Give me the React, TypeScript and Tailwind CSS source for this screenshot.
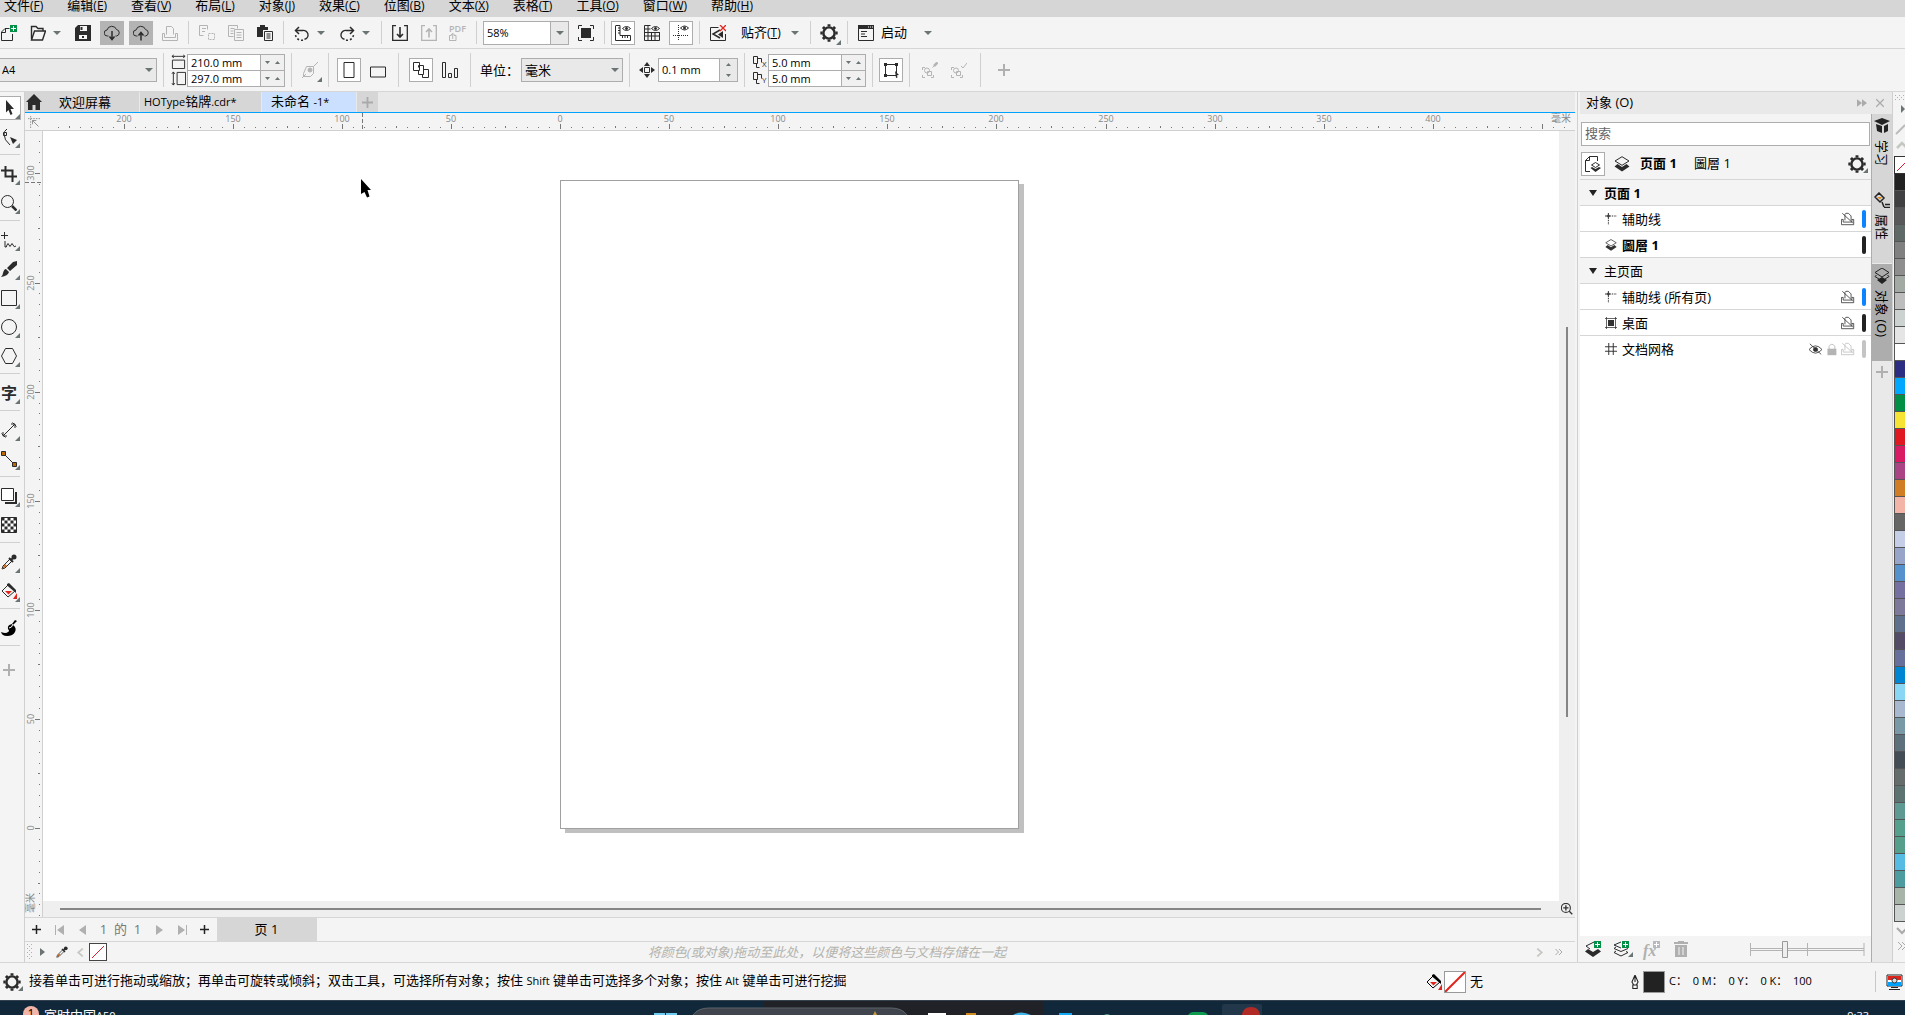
import React, { useState } from "react";

type Kids = { children?: React.ReactNode };

// ---------- shared bits ----------

const Ico = ({ children, size = 16, className = "" }: Kids & { size?: number; className?: string }) => (
  <svg
    width={size}
    height={size}
    viewBox="0 0 16 16"
    fill="none"
    stroke="currentColor"
    strokeWidth="1"
    className={`shrink-0 ${className}`}
    aria-hidden="true"
  >
    {children}
  </svg>
);

const Caret = ({ className = "" }: { className?: string }) => (
  <svg width="8" height="4" viewBox="0 0 8 4" className={`shrink-0 ${className}`} aria-hidden="true">
    <path d="M0 0h8L4 4z" fill="#6b7474" />
  </svg>
);

const Corner = () => (
  <svg width="5" height="5" viewBox="0 0 5 5" className="absolute right-0 bottom-0" aria-hidden="true">
    <path d="M5 0v5H0z" fill="#6b7474" />
  </svg>
);

const Sep = () => (
  <div className="flex h-full w-2 shrink-0 justify-center py-1">
    <div className="w-px bg-[#d0d0d0]" />
  </div>
);

const Tool = ({ label, mode = "plain", dim, children }: Kids & { label: string; mode?: string; dim?: boolean }) => (
  <div className="flex w-[29px] shrink-0 justify-center">
    <button
      aria-label={label}
      className={`relative flex h-6 w-6 items-center justify-center ${dim ? "text-[#b4b4b4]" : "text-[#2b2b2b]"} ${
        mode === "on" ? "border border-[#adadad] bg-white" : mode === "dark" ? "bg-[#b4b4b4]" : ""
      }`}
    >
      {children}
    </button>
  </div>
);

const DropCaret = ({ label }: { label: string }) => (
  <button aria-label={label} className="flex h-6 w-4 shrink-0 items-center pl-px">
    <Caret />
  </button>
);

const Gear = ({ size = 18 }: { size?: number }) => (
  <Ico size={size}>
    <circle cx="8" cy="8" r="5" strokeWidth="2.2" />
    <path
      d="M8 .3v2M8 13.7v2M.3 8h2M13.7 8h2M2.6 2.6L4 4M12 12l1.4 1.4M2.6 13.4L4 12M12 4l1.4-1.4"
      strokeWidth="2.6"
    />
  </Ico>
);

const Layers = ({ size = 16 }: { size?: number }) => (
  <Ico size={size}>
    <path d="M8 .7L1 5l7 4.300L15 5z" />
    <path d="M3.500 8L.5 10.500 8 15.500l7.500-5-3-2.500L8 11z" fill="currentColor" stroke="none" />
  </Ico>
);

const NoPrint = () => (
  <Ico size={14}>
    <path d="M4.500 9.500v-7l1-1h3l3 3v5M.5 8.500v6h14v-6h-2v3h-10v-3zM1.500 1.500l12 11" />
  </Ico>
);

const Dropper = ({ size = 16, tip = "#c8641b" }: { size?: number; tip?: string }) => (
  <Ico size={size}>
    <path d="M9 5L2 12l-1 3 3-1 7-7" />
    <path d="M4 10l-3 5 5-3z" fill={tip} stroke="none" />
    <path d="M8 4l4 4M9.500 6.500l4-4" strokeWidth="2" />
    <circle cx="13" cy="3" r="2.500" fill="currentColor" stroke="none" />
  </Ico>
);

const Bucket = () => (
  <Ico>
    <path d="M1 8l6-6 7 6-7 6z" />
    <path d="M6 1l2-1 7 7v3L6 2.500z" fill="currentColor" stroke="none" />
    <path d="M4 8h7l-3.500 3.500z" fill="#e0241c" stroke="none" />
    <path d="M16 10v6h-4z" fill="#e0241c" stroke="none" />
  </Ico>
);

const Plus = ({ size = 12, color = "#b0b0b0" }: { size?: number; color?: string }) => (
  <svg width={size} height={size} viewBox="0 0 12 12" aria-hidden="true">
    <path d="M6 0v12M0 6h12" stroke={color} strokeWidth="2" />
  </svg>
);

const Grip = () => (
  <svg width="6" height="16" aria-hidden="true">
    {[0, 4, 8, 12].map((y) => (
      <path key={y} d={`M0 ${y}h1v1h-1zM4 ${y}h1v1h-1zM2 ${y + 2}h1v1h-1z`} fill="#b0b0b0" />
    ))}
  </svg>
);

// latin letters run a bit smaller than the chinese around them
const Latin = ({ children }: Kids) => <span className="text-[11px]">{children}</span>;

// ---------- menu ----------

const menus = [
  ["文件", "F"],
  ["编辑", "E"],
  ["查看", "V"],
  ["布局", "L"],
  ["对象", "J"],
  ["效果", "C"],
  ["位图", "B"],
  ["文本", "X"],
  ["表格", "T"],
  ["工具", "O"],
  ["窗口", "W"],
  ["帮助", "H"],
];

const MenuBar = () => (
  <nav className="flex h-[17px] shrink-0 items-end gap-6 overflow-hidden bg-[#d6d6d6] pl-1">
    {menus.map(([name, key]) => (
      <button key={key} className="h-[22px] shrink-0 pb-[2px] leading-4">
        {name}
        <span className="text-xs">
          (<u>{key}</u>)
        </span>
      </button>
    ))}
  </nav>
);

// ---------- standard toolbar ----------

const cloud = "M4.500 11H3.500a3 3 0 0 1-.5-6 5 5 0 0 1 9.500-.5A3.300 3.300 0 0 1 12.500 11h-1";

const MainBar = () => (
  <div className="flex h-8 shrink-0 items-center border-b border-[#d6d6d6]">
    <div className="-ml-[6px] flex">
      <Tool label="新建">
        <Ico>
          <path d="M8.500 3.500H4L.5 7v8.500h11V9M4.500 3.500v4h-4" />
          <path d="M9 0h7v7H9z" fill="#008f45" stroke="none" />
          <path d="M12.500 1v5M10 3.500h5" stroke="#fff" />
        </Ico>
      </Tool>
      <Tool label="打开">
        <Ico>
          <path d="M1.500 14V1.500H6l2 2h5V6" strokeWidth="1.400" />
          <path d="M1.500 15L4.500 6h11l-3 9z" strokeWidth="1.400" />
        </Ico>
      </Tool>
    </div>
    <DropCaret label="最近文件" />
    <Tool label="保存">
      <Ico>
        <path d="M3 0h13v16H0V3z" fill="currentColor" stroke="none" />
        <path d="M5 1h7v5H5zM4 10h8v4H4z" fill="#f4f4f4" stroke="none" />
        <path d="M6.500 2v3M7 12h2" strokeWidth="2" />
      </Ico>
    </Tool>
    <Tool label="从云端打开" mode="dark">
      <Ico>
        <path d={cloud} />
        <path d="M8 6v8M5.500 11.500L8 14.500l2.500-3" strokeWidth="1.500" />
      </Ico>
    </Tool>
    <Tool label="保存到云端" mode="dark">
      <Ico>
        <path d={cloud} />
        <path d="M8 15.500V8M5.500 10.500L8 7.500l2.500 3" strokeWidth="1.500" />
      </Ico>
    </Tool>
    <Tool label="打印" dim>
      <Ico>
        <path d="M4.500 9.500v-8h5l2 2v6M.5 8.500v7h15v-7h-2v4h-11v-4z" />
      </Ico>
    </Tool>
    <Sep />
    <Tool label="剪切" dim>
      <Ico>
        <path d="M.5 10.500v-10h8v4M.5 10.500h4M3 3.500h4M3 6.500h3" />
        <path d="M9.500 8.500h6v6h-6z" strokeDasharray="2 1" />
      </Ico>
    </Tool>
    <Tool label="复制" dim>
      <Ico>
        <path d="M5.500 11.500h-5V.5h9v3M2.500 3.500h4M2.500 6h3M2.500 8.500h3M6.500 4.500h9v11h-9zM8.500 7.500h5M8.500 10h5M8.500 12.500h5" />
      </Ico>
    </Tool>
    <Tool label="粘贴">
      <Ico>
        <path d="M0 2h3V0h5v2h3v3H6v7H0z" fill="currentColor" stroke="none" />
        <path d="M7.500 6.500h8v9h-8zM9.500 9h4M9.500 11h4M9.500 13h4" />
      </Ico>
    </Tool>
    <Sep />
    <Tool label="撤消">
      <Ico>
        <path d="M2 5.500h6.500a4.500 4.500 0 0 1 2 8.800" strokeWidth="1.400" />
        <path d="M5 2L1.500 5.500 5 9" strokeWidth="1.500" />
        <path d="M9 15a6 6 0 0 1-7.500-5" strokeDasharray="2 2" strokeWidth="1.500" />
      </Ico>
    </Tool>
    <DropCaret label="撤消列表" />
    <Tool label="重做">
      <Ico>
        <path d="M14 5.500H7.500a4.500 4.500 0 0 0-2 8.800" strokeWidth="1.400" />
        <path d="M11 2l3.500 3.500L11 9" strokeWidth="1.500" />
        <path d="M7 15a6 6 0 0 0 7.500-5" strokeDasharray="2 2" strokeWidth="1.500" />
      </Ico>
    </Tool>
    <DropCaret label="重做列表" />
    <Sep />
    <Tool label="导入">
      <Ico>
        <path d="M4 .7H.7v14.600h14.600V.7H12" strokeWidth="1.300" />
        <path d="M8 2v10M5 9l3 3 3-3" strokeWidth="1.600" />
      </Ico>
    </Tool>
    <Tool label="导出" dim>
      <Ico>
        <path d="M4 .7H.7v14.600h14.600V.7H12" strokeWidth="1.300" />
        <path d="M8 12.500V4M5 7l3-3 3 3" strokeWidth="1.600" />
      </Ico>
    </Tool>
    <Tool label="发布为 PDF" dim>
      <span className="flex flex-col items-start">
        <span className="text-[9px] leading-2 font-semibold">PDF</span>
        <Ico size={8}>
          <path d="M5 5H1v10h13V5h-4M7.500 12V1M4 4l3.500-3.500L11 4" strokeWidth="2" />
        </Ico>
      </span>
    </Tool>
    <Sep />
    <div className="mr-[2px] ml-[3px] flex h-6 w-[86px] shrink-0 border border-[#adadad] bg-white text-[11px]">
      <input aria-label="缩放级别" defaultValue="58%" className="w-0 flex-1 pl-[3px] outline-none" />
      <button
        aria-label="缩放级别列表"
        className="flex w-[18px] items-center justify-center border-l border-[#adadad] bg-[#e9e9e9]"
      >
        <Caret />
      </button>
    </div>
    <Tool label="全屏预览">
      <Ico>
        <path d="M3 3h10v10H3z" fill="currentColor" stroke="none" />
        <path d="M.5 4V.5H4M12 .5h3.500V4M15.500 12v3.500H12M4 15.500H.5V12" />
      </Ico>
    </Tool>
    <Sep />
    <Tool label="显示标尺" mode="on">
      <Ico>
        <path d="M1 .5h4v10h10.500v5H.5V.5M3 3h2M3 5.500h2M3 8h2M7.500 13v-2M10 13v-2M12.500 13v-2" />
        <path d="M7.500 3.500q4-4 8 0-4 4-8 0z" />
        <circle cx="11.500" cy="3.500" r="1" fill="currentColor" />
      </Ico>
    </Tool>
    <Tool label="显示网格">
      <Ico>
        <path d="M.5 .5h6M.5 .5v15h15V7M.5 4h6M.5 7.500h15M.5 11h15M4 .5v15M7.500 7v8.500M11 7v8.500" />
        <path d="M7.500 3.500q4-4 8 0-4 4-8 0z" />
        <circle cx="11.500" cy="3.500" r="1" fill="currentColor" />
      </Ico>
    </Tool>
    <Tool label="显示辅助线" mode="on">
      <Ico>
        <path d="M5.500 0v16M0 10.500h16" strokeDasharray="1 1" />
        <path d="M7.500 3q4-4 8 0-4 4-8 0z" />
        <circle cx="11.500" cy="3" r="1" fill="currentColor" />
      </Ico>
    </Tool>
    <Sep />
    <Tool label="关闭贴齐">
      <Ico>
        <path d="M8.500 2.500h-8v13h15V9" />
        <path d="M10 5L3 9l7 4" strokeWidth="1.500" />
        <path d="M13 6v7L8 9.500z" fill="currentColor" stroke="none" />
        <path d="M10 0l6 6M16 0l-6 6" stroke="#e0241c" strokeWidth="1.300" />
      </Ico>
    </Tool>
    <button className="ml-[9px] w-[41px] shrink-0 pb-px text-left whitespace-nowrap">
      贴齐
      <span className="text-xs">
        (<u>T</u>)
      </span>
    </button>
    <div className="ml-2">
      <DropCaret label="贴齐选项" />
    </div>
    <Sep />
    <Tool label="选项">
      <Gear />
      <Corner />
    </Tool>
    <Sep />
    <Tool label="启动窗口">
      <Ico>
        <path d="M.5 .5h15v15H.5zM3 6.500h6M3 9h4M3 11.500h6" />
        <path d="M0 0h16v4H0z" fill="currentColor" stroke="none" />
        <path d="M10 2h1M12 2h1M14 2h1" stroke="#fff" />
      </Ico>
    </Tool>
    <button className="ml-px shrink-0 pb-px">启动</button>
    <div className="ml-4">
      <DropCaret label="启动列表" />
    </div>
  </div>
);

// ---------- property bar ----------

const PairField = ({ label, value, second }: { label: string; value: string; second?: boolean }) => (
  <div className={`flex h-[17px] w-[98px] border border-[#adadad] bg-white text-[11px] ${second ? "-mt-px" : ""}`}>
    <input aria-label={label} defaultValue={value} className="w-0 flex-1 pl-[3px] leading-[15px] outline-none" />
    <span className="flex w-6 items-center justify-between border-l border-[#adadad] bg-[#f0f0f0] px-1">
      <button aria-label={`${label}减`} className="text-[#6b7474]">
        <svg width="5" height="3">
          <path d="M0 0h5L2.500 3z" fill="currentColor" />
        </svg>
      </button>
      <button aria-label={`${label}加`} className="text-[#6b7474]">
        <svg width="5" height="3">
          <path d="M0 3h5L2.500 0z" fill="currentColor" />
        </svg>
      </button>
    </span>
  </div>
);

const PropertyBar = () => (
  <div className="flex h-[43px] shrink-0 items-center border-b border-[#d6d6d6]">
    <div className="relative -ml-[2px] h-6 w-[159px] shrink-0 text-[11px]">
      <select
        aria-label="页面大小"
        className="h-full w-full appearance-none border border-[#adadad] bg-[#e9e9e9] pl-[3px] outline-none"
      >
        <option>A4</option>
      </select>
      <Caret className="absolute top-[10px] right-1" />
    </div>
    <div className="ml-[2px] h-full">
      <Sep />
    </div>
    <div className="ml-[3px] flex w-4 flex-col items-center gap-[2px] text-[#2b2b2b]">
      <Ico size={15}>
        <path d="M1.500 6.500h13v9h-13zM1 2.500h14M3 1L1 2.500 3 4M13 1l2 1.500L13 4" />
      </Ico>
      <Ico size={15}>
        <path d="M6.500 1.500h9v13h-9zM2.500 1v14M1 3l1.500-2L4 3M1 13l1.500 2L4 13" />
      </Ico>
    </div>
    <div className="ml-px shrink-0">
      <PairField label="页面宽度" value="210.0 mm" />
      <PairField label="页面高度" value="297.0 mm" second />
    </div>
    <div className="ml-[2px] h-full">
      <Sep />
    </div>
    <Tool label="自动适应页面" dim>
      <Ico>
        <path d="M4.500 4.500h7v7l-3 3h-7v-3l3-7M12 4l4-4M0 16l4-4" />
        <circle cx="8" cy="8" r="2" fill="currentColor" />
      </Ico>
      <Corner />
    </Tool>
    <Sep />
    <div className="ml-[2px] flex">
      <Tool label="纵向" mode="on">
        <Ico>
          <path d="M3 .5h10v15H3z" />
        </Ico>
      </Tool>
      <Tool label="横向">
        <Ico className="mt-1">
          <path d="M.5 3h15v10H.5z" />
        </Ico>
      </Tool>
    </div>
    <div className="ml-[2px] h-full">
      <Sep />
    </div>
    <div className="ml-1 flex">
      <Tool label="所有页面" mode="on">
        <Ico>
          <path d="M.5 .5h6v8h-6zM5.500 5.500v-2h5v9h-5v-4" />
          <path d="M10.500 7.500h5v8h-6v-3" />
        </Ico>
      </Tool>
      <Tool label="当前页面">
        <Ico>
          <path d="M.5 .5h3v15h-3zM6.500 11.500h3v4h-3zM12.500 6.500h3v9h-3z" />
        </Ico>
      </Tool>
    </div>
    <div className="ml-[2px] h-full">
      <Sep />
    </div>
    <label htmlFor="units" className="ml-[6px] w-[41px] shrink-0 pb-px whitespace-nowrap">
      单位：
    </label>
    <div className="relative h-6 w-[102px] shrink-0">
      <select
        id="units"
        className="h-full w-full appearance-none border border-[#adadad] bg-[#e9e9e9] pb-px pl-[3px] outline-none"
      >
        <option>毫米</option>
      </select>
      <Caret className="absolute top-[10px] right-1" />
    </div>
    <div className="ml-[2px] h-full">
      <Sep />
    </div>
    <div className="ml-[6px] text-[#2b2b2b]">
      <Ico>
        <path d="M5.500 5.500h5v5h-5z" />
        <path d="M8 0l3 4H5zM8 16l3-4H5zM0 8l4-3v6zM16 8l-4-3v6z" fill="currentColor" stroke="none" />
      </Ico>
    </div>
    <div className="ml-[3px] flex h-6 w-20 shrink-0 border border-[#adadad] bg-white text-[11px]">
      <input aria-label="微调距离" defaultValue="0.1 mm" className="w-0 flex-1 pl-[3px] outline-none" />
      <span className="flex w-[18px] flex-col items-center justify-between border-l border-[#adadad] bg-[#e9e9e9] py-1">
        <button aria-label="增加微调" className="leading-none">
          <svg width="5" height="3" className="block">
            <path d="M0 3h5L2.500 0z" fill="#6b7474" />
          </svg>
        </button>
        <button aria-label="减少微调" className="leading-none">
          <svg width="5" height="3" className="block">
            <path d="M0 0h5L2.500 3z" fill="#6b7474" />
          </svg>
        </button>
      </span>
    </div>
    <div className="ml-[2px] h-full">
      <Sep />
    </div>
    <div className="ml-1 flex w-4 flex-col gap-[2px] text-[#2b2b2b]">
      {["X", "Y"].map((axis) => (
        <span key={axis} className="flex items-end">
          <svg width="10" height="14" fill="none" stroke="currentColor" aria-hidden="true">
            <path d="M1.500 1.500h4v7h-4zM5.500 3.500h4v4M4.500 9v3.500h3" />
          </svg>
          <span className="text-[8px] leading-[10px]">{axis}</span>
        </span>
      ))}
    </div>
    <div className="shrink-0">
      <PairField label="再制距离 X" value="5.0 mm" />
      <PairField label="再制距离 Y" value="5.0 mm" second />
    </div>
    <div className="ml-[2px] h-full">
      <Sep />
    </div>
    <Tool label="视为已填充" mode="on">
      <Ico>
        <path d="M2.500 2.500h11v11h-11z" />
        <path d="M1 1h3v3H1zM12 1h3v3h-3zM1 12h3v3H1zM12 9l4 4-2 .3.500 2.200-1.500.5z" fill="currentColor" stroke="none" />
      </Ico>
    </Tool>
    <Sep />
    <div className="ml-[2px] flex">
      <Tool label="编辑边界" dim>
        <Ico>
          <path d="M.5 8V5.500H3M.5 13v2.500H3M9 15.500h2.500V13M5.500 9.500h4v4h-4zM15 1l-4.500 4.500" />
          <circle cx="5" cy="8.500" r="2.500" />
          <path d="M15.500 .5L12 4" strokeWidth="2.500" />
        </Ico>
      </Tool>
      <Tool label="完成边界" dim>
        <Ico>
          <path d="M.5 8V5.500H3M.5 13v2.500H3M9 15.500h2.500V13M5.500 9.500h4v4h-4zM10 4l2 2 4-5" />
          <circle cx="5" cy="8.500" r="2.500" />
        </Ico>
      </Tool>
    </div>
    <div className="ml-[3px] h-full">
      <Sep />
    </div>
    <button aria-label="自定义属性栏" className="ml-[14px]">
      <Plus />
    </button>
  </div>
);

// ---------- toolbox ----------

const BoxTool = ({ label, on, corner = true, children }: Kids & { label: string; on?: boolean; corner?: boolean }) => (
  <div className="flex h-[29px] w-full shrink-0 items-end pb-[1px]">
    <button
      aria-label={label}
      className={`relative flex h-6 w-[21px] items-center border-y border-r pl-px text-[#2b2b2b] ${
        on ? "border-[#adadad] bg-white" : "border-transparent"
      }`}
    >
      {children}
      {corner && <Corner />}
    </button>
  </div>
);

const BoxSep = () => (
  <div className="flex h-2 shrink-0 items-center">
    <div className="h-px w-5 bg-[#d0d0d0]" />
  </div>
);

const Toolbox = () => (
  <aside className="flex w-[25px] shrink-0 flex-col border-r border-[#d0d0d0]">
    <BoxTool label="选择工具" on>
      <Ico>
        <path d="M5 0l8 9H9.500l2 5-2 1-2-5L5 12.500z" fill="currentColor" stroke="none" />
      </Ico>
    </BoxTool>
    <BoxTool label="形状工具">
      <Ico>
        <path d="M6 0Q3 2 3 5q0 6 6 11M2.500 3.500h3v3h-3z" />
        <path d="M9 8l7 3-4 4z" fill="currentColor" stroke="none" />
      </Ico>
    </BoxTool>
    <BoxSep />
    <BoxTool label="裁剪工具">
      <Ico>
        <path d="M4.500 0v10.500H16M0 4.500h11.500V16" strokeWidth="2" />
      </Ico>
    </BoxTool>
    <BoxTool label="缩放工具">
      <Ico>
        <circle cx="6.500" cy="6.500" r="6" />
        <path d="M11 11l4.500 4.500" strokeWidth="2.500" />
      </Ico>
    </BoxTool>
    <BoxSep />
    <BoxTool label="手绘工具">
      <Ico>
        <path d="M3.500 0v7M0 3.500h7M4 9v6q1.500 1 2-2 1-3 2 0t2 0 2 0 3 1" />
      </Ico>
    </BoxTool>
    <BoxTool label="艺术笔工具">
      <Ico>
        <path d="M16 0v4l-7 6-3-3 6-6zM5 8l3 3q-1 4-8 5 2-2 2-4 1-4 3-4z" fill="currentColor" stroke="none" />
      </Ico>
    </BoxTool>
    <BoxTool label="矩形工具">
      <Ico>
        <path d="M.5 .5h15v15H.5z" />
      </Ico>
    </BoxTool>
    <BoxTool label="椭圆形工具">
      <Ico>
        <circle cx="8" cy="8" r="7.500" />
      </Ico>
    </BoxTool>
    <BoxTool label="多边形工具">
      <Ico>
        <path d="M4.500 .5h7l4 7.500-4 7.500h-7L.5 8z" />
      </Ico>
    </BoxTool>
    <BoxSep />
    <BoxTool label="文本工具">
      <span className="text-base leading-4 font-bold">字</span>
    </BoxTool>
    <BoxSep />
    <BoxTool label="平行度量工具">
      <Ico>
        <path d="M2.500 13.500l11-11M.5 11.500l4 4M11.500 .5l4 4M2 10v4h4M10 2h4v4" />
      </Ico>
    </BoxTool>
    <BoxTool label="连接器工具">
      <Ico>
        <path d="M3 3l10 10" />
        <path d="M.5 .5h4v4h-4zM11.500 11.500h4v4h-4z" fill="#b96a00" />
      </Ico>
    </BoxTool>
    <BoxSep />
    <BoxTool label="阴影工具">
      <Ico>
        <path d="M.5 .5h12v12H.5z" fill="#fff" />
        <path d="M4 15h11V4" strokeWidth="2" />
      </Ico>
    </BoxTool>
    <BoxTool label="透明度工具" corner={false}>
      <Ico>
        <path d="M.5 .5h15v15H.5z" fill="#fff" />
        {[0, 1, 2, 3, 4].map((r) =>
          [0, 1, 2, 3, 4]
            .filter((c) => (r + c) % 2 === 0)
            .map((c) => (
              <path
                key={`${r}${c}`}
                d={`M${c * 3 + 0.5} ${r * 3 + 0.5}h3v3h-3z`}
                fill="currentColor"
                stroke="none"
              />
            ))
        )}
      </Ico>
    </BoxTool>
    <BoxSep />
    <BoxTool label="颜色滴管工具">
      <Dropper />
    </BoxTool>
    <BoxTool label="交互式填充工具">
      <Bucket />
    </BoxTool>
    <BoxSep />
    <BoxTool label="智能绘图" corner={false}>
      <Ico>
        <path d="M14 0l2 1-4 4q4 3 2 7-2 4-8 4-5 0-6-4 5 2 7 0 2-1 0-3-1-4 4-5z" fill="#000" stroke="none" />
        <path d="M8 8q3 0 4-4" stroke="#fff" />
      </Ico>
    </BoxTool>
    <BoxSep />
    <button aria-label="自定义工具箱" className="mt-[15px] ml-[3px] w-3">
      <Plus />
    </button>
  </aside>
);

// ---------- document area ----------

// pixels for one millimetre at 58%
const MM = 2.182;
const steps = Array.from({ length: 140 }, (_, i) => (i - 46) * 5);

const HRuler = () => (
  <div className="flex h-[18px] shrink-0 border-b border-[#d0d0d0]">
    <div className="flex w-[18px] shrink-0 items-center justify-center text-[#777]">
      <Ico size={12}>
        <path d="M3.500 0v16M0 3.500h16" strokeDasharray="2 1.500" />
        <path d="M6 6l8 8M6 11V6h5" />
      </Ico>
    </div>
    <div className="relative min-w-0 flex-1 overflow-hidden">
      <svg width="100%" height="17" className="block text-[9px]" shapeRendering="crispEdges">
        {steps.map((v) => {
          const x = Math.round(517 + v * MM);
          const major = v % 50 === 0;
          return (
            <g key={v}>
              <rect x={x} y={major ? 11 : v % 25 === 0 ? 13 : 14} width="1" height={major ? 5 : v % 25 === 0 ? 2 : 1} fill="#777" />
              {major && v < 450 && (
                <text x={x} y="9" textAnchor="middle" fill="#888">
                  {Math.abs(v)}
                </text>
              )}
            </g>
          );
        })}
        <path d="M319.500 0v17" stroke="#777" strokeDasharray="4 2" />
      </svg>
      <span className="absolute top-0 right-1 text-[10px] leading-[11px] text-[#888]">毫米</span>
    </div>
  </div>
);

const VRuler = () => (
  <div className="relative w-[18px] shrink-0 overflow-hidden border-r border-[#d0d0d0]">
    <svg width="17" height="100%" className="block text-[9px]" shapeRendering="crispEdges">
      {steps
        .filter((v) => v > -45 && v < 325)
        .map((v) => {
          const y = Math.round(697 - v * MM);
          const major = v % 50 === 0;
          return (
            <g key={v}>
              <rect x={major ? 10 : v % 25 === 0 ? 13 : 14} y={y} width={major ? 5 : v % 25 === 0 ? 2 : 1} height="1" fill="#777" />
              {major && (
                <text x="9" y={y} textAnchor="middle" fill="#888" transform={`rotate(-90 9 ${y})`}>
                  {Math.abs(v)}
                </text>
              )}
            </g>
          );
        })}
      <path d="M0 51.500h17" stroke="#777" strokeDasharray="4 2" />
    </svg>
    <span className="absolute bottom-1 left-0 rotate-180 text-[10px] leading-[11px] text-[#888] [text-orientation:sideways] [writing-mode:vertical-rl]">
      毫米
    </span>
  </div>
);

const DocTabs = () => (
  <div className="flex h-[21px] shrink-0 border-b border-[#00a2ff] bg-[#e9e9e9]">
    <button aria-label="主页" className="flex w-[17px] items-center bg-[#d6d6d6] pl-px text-[#2b2b2b]">
      <Ico>
        <path d="M8 0l8 8h-2v8H9.500v-5h-3v5H2V8H0z" fill="currentColor" stroke="none" />
      </Ico>
    </button>
    <button className="w-[97px] shrink-0 bg-[#d6d6d6] pb-px pl-[17px] text-left">欢迎屏幕</button>
    <button className="w-[122px] shrink-0 border-l border-[#e9e9e9] bg-[#d6d6d6] pb-px pl-1 text-left">
      <Latin>HOType</Latin>铭牌<Latin>.cdr*</Latin>
    </button>
    <button className="w-24 shrink-0 border-x border-[#e9e9e9] bg-[#cbe0ff] pb-px pl-[9px] text-left">
      未命名 <Latin>-1*</Latin>
    </button>
    <button aria-label="新建文档" className="flex w-[21px] items-center justify-center bg-[#d6d6d6]">
      <Plus size={11} color="#aaa" />
    </button>
  </div>
);

const Canvas = () => (
  <div className="flex min-h-0 flex-1">
    <VRuler />
    <div className="flex min-w-0 flex-1 flex-col">
      <div className="flex min-h-0 flex-1">
        <div className="relative min-w-0 flex-1 overflow-hidden bg-white">
          <div className="absolute top-[49px] left-[517px] h-[649px] w-[459px] border border-[#a0a0a0] bg-white shadow-[5px_4px_0_#c0c0c0]" />
          <svg width="12" height="20" className="absolute top-[48px] left-[318px]" aria-hidden="true">
            <path d="M0 0l10 11H6.500l2 6.500-2.500 1-2.500-5.500L0 15z" fill="#000" />
          </svg>
        </div>
        <div className="flex w-4 shrink-0 flex-col items-center bg-[#efefef] pt-[196px] pb-[184px]">
          <div className="w-[2px] flex-1 bg-[#858585]" />
        </div>
      </div>
      <div className="flex h-4 shrink-0 items-center bg-[#efefef] pr-[2px] pl-[17px]">
        <div className="mr-5 h-[2px] flex-1 bg-[#858585]" />
        <button aria-label="导航器" className="text-[#333]">
          <Ico size={12}>
            <circle cx="6.500" cy="6.500" r="6" strokeWidth="1.500" />
            <path d="M6.500 3v7M3 6.500h7M11 11l4 4" strokeWidth="1.800" />
          </Ico>
        </button>
      </div>
    </div>
  </div>
);

const NavTri = ({ d, label }: { d: string; label: string }) => (
  <button aria-label={label} className="flex w-[23px] justify-center">
    <svg width="10" height="10">
      <path d={d} fill="#b0b0b0" />
    </svg>
  </button>
);

const PageNav = () => (
  <div className="flex h-[25px] shrink-0 items-center border-y border-[#d6d6d6]">
    <button aria-label="在前面添加页" className="flex w-[23px] justify-center">
      <Plus size={9} color="#222" />
    </button>
    <NavTri label="首页" d="M0 0h1v10h-1zM9 0v10L2 5z" />
    <NavTri label="上一页" d="M8 0v10L1 5z" />
    <span className="w-[53px] pb-px text-center text-[#777]">1&nbsp; 的&nbsp; 1</span>
    <NavTri label="下一页" d="M2 0v10l7-5z" />
    <NavTri label="末页" d="M1 0v10l7-5zM9 0h1v10h-1z" />
    <button aria-label="在后面添加页" className="flex w-[23px] justify-center">
      <Plus size={9} color="#222" />
    </button>
    <button className="ml-[1px] h-full w-[100px] bg-[#d6d6d6] pr-px pb-[2px]">页 1</button>
  </div>
);

const DocPalette = () => (
  <div className="flex h-5 shrink-0 items-center">
    <div className="ml-[2px]">
      <Grip />
    </div>
    <button aria-label="调色板选项" className="ml-[7px]">
      <svg width="5" height="8">
        <path d="M0 0v8l5-4z" fill="#6b7474" />
      </svg>
    </button>
    <button aria-label="取色" className="ml-[11px] text-[#2b2b2b]">
      <Dropper size={12} />
    </button>
    <button aria-label="向左滚动" className="ml-2 text-[#c4c8c0]">
      <Ico size={9}>
        <path d="M12 1L4 8l8 7" strokeWidth="3" />
      </Ico>
    </button>
    <button aria-label="无颜色" className="ml-[4px] border border-[#444] bg-white">
      <Ico>
        <path d="M2 14L14 2" stroke="#d8202c" />
      </Ico>
    </button>
    <p className="min-w-0 flex-1 pb-px pl-3 text-center text-[#b3b3ad] italic">
      将颜色(或对象)拖动至此处，以便将这些颜色与文档存储在一起
    </p>
    <button aria-label="向右滚动" className="mr-[11px] text-[#c4c8c0]">
      <Ico size={9}>
        <path d="M4 1l8 7-8 7" strokeWidth="3" />
      </Ico>
    </button>
    <button aria-label="展开" className="mr-3 text-[#aaa]">
      <Ico size={8}>
        <path d="M1 2l6 6-6 6M8 2l6 6-6 6" strokeWidth="2" />
      </Ico>
    </button>
  </div>
);

// ---------- objects docker ----------

type Row = { name: string; icon?: string; bold?: boolean; head?: boolean; bar?: string; noPrint?: boolean; off?: boolean };

const rows: Row[] = [
  { name: "页面 1", head: true, bold: true },
  { name: "辅助线", icon: "guide", bar: "#0a84ff", noPrint: true },
  { name: "圖層 1", icon: "layer", bold: true, bar: "#222223" },
  { name: "主页面", head: true },
  { name: "辅助线 (所有页)", icon: "guide", bar: "#0a84ff", noPrint: true },
  { name: "桌面", icon: "desk", bar: "#222223", noPrint: true },
  { name: "文档网格", icon: "grid", bar: "#c4c4c4", off: true },
];

const RowIcon = ({ kind }: { kind?: string }) => {
  if (kind === "layer") return <Layers size={12} />;
  if (kind === "desk")
    return (
      <Ico size={12}>
        <path d="M4 4h8v8H4z" fill="currentColor" stroke="none" />
        <path d="M2 0v16M14 0v16M0 2h16M0 14h16" />
      </Ico>
    );
  if (kind === "grid")
    return (
      <Ico size={12}>
        <path d="M5 0v16M11 0v16M0 5h16M0 11h16" strokeWidth="1.300" />
      </Ico>
    );
  return (
    <Ico size={12}>
      <path d="M0 4h8" strokeWidth="1.300" />
      <path d="M4.500 0v8" strokeWidth="1.300" />
      <path d="M9 4h7M4.500 9v7" strokeDasharray="2 1.300" strokeWidth="1.300" />
      <circle cx="4.500" cy="4" r="1.500" />
    </Ico>
  );
};

const ObjectList = () => {
  const [closed, setClosed] = useState(false);

  return (
    <ul className="min-h-0 flex-1 bg-white">
      {rows.map((row, i) => (
        <li
          key={row.name}
          className={`flex h-[26px] items-center ${i < rows.length - 1 ? "border-b border-[#d6d6d6]" : ""} ${
            row.head ? "bg-[#f4f4f4] pl-[9px]" : "pl-[25px]"
          }`}
        >
          {row.head ? (
            <button aria-label="折叠" aria-expanded={!closed} onClick={() => setClosed(!closed)}>
              <svg width="8" height="6">
                <path d="M0 0h8L4 6z" fill="#222" />
              </svg>
            </button>
          ) : (
            <span className="text-[#333]">
              <RowIcon kind={row.icon} />
            </span>
          )}
          <span className={`flex-1 ${row.head ? "pl-[7px]" : "pl-[5px]"} ${row.bold ? "font-bold" : ""}`}>
            {row.name}
          </span>
          {row.off && (
            <span className="mr-[3px] flex items-center gap-[3px] text-[#333]">
              <Ico size={13}>
                <path d="M0 8q8-9 16 0-8 9-16 0zM1 1l14 13" />
                <circle cx="8" cy="8" r="2.500" fill="currentColor" />
              </Ico>
              <Ico size={13} className="text-[#b4b4b4]">
                <path d="M3 7h11v8H3z" fill="currentColor" stroke="none" />
                <path d="M5 8V4q3.500-5 7 0v4" />
              </Ico>
            </span>
          )}
          {(row.noPrint || row.off) && (
            <span className={row.off ? "text-[#c4c4c4]" : "text-[#444]"}>
              <NoPrint />
            </span>
          )}
          {row.bar && (
            <span className="mr-[5px] ml-[7px] h-[18px] w-1 rounded-full" style={{ background: row.bar }} />
          )}
        </li>
      ))}
    </ul>
  );
};

const SideTab = ({ label, on, className, children }: Kids & { label: string; on?: boolean; className: string }) => (
  <button
    className={`flex w-full shrink-0 flex-col items-center pt-1 text-[#222] ${className} ${
      on ? "bg-[#adadad]" : "bg-[#d6d6d6]"
    }`}
  >
    {children}
    <span className="mt-[6px] whitespace-nowrap text-black [text-orientation:sideways] [writing-mode:vertical-rl]">
      {label}
    </span>
  </button>
);

const Docker = () => (
  <aside className="flex w-[315px] shrink-0 flex-col border-l border-[#d0d0d0] pl-[2px]">
    <header className="flex h-[22px] shrink-0 items-center bg-[#e9e9e9] pr-[7px] pl-[6px]">
      <h2 className="flex-1 pb-[2px]">对象 (O)</h2>
      <button aria-label="折叠泊坞窗" className="mr-2 text-[#aaa]">
        <Ico size={10}>
          <path d="M0 2l8 6-8 6zM8 2l8 6-8 6z" fill="currentColor" stroke="none" />
        </Ico>
      </button>
      <button aria-label="关闭" className="text-[#aaa]">
        <Ico size={10}>
          <path d="M2 2l12 12M14 2L2 14" strokeWidth="2" />
        </Ico>
      </button>
    </header>
    <div className="flex min-h-0 flex-1">
      <div className="flex min-w-0 flex-1 flex-col border-r border-[#adadad]">
        <div className="flex px-px pt-2">
          <input
            aria-label="搜索"
            placeholder="搜索"
            className="h-6 w-full border border-[#adadad] bg-white pb-[2px] pl-[3px] outline-none placeholder:text-[#666]"
          />
        </div>
        <div className="mt-[2px] flex h-8 shrink-0 items-center border-b border-[#d6d6d6]">
          <button
            aria-label="显示页面"
            className="ml-px flex h-6 w-6 items-center justify-center border border-[#adadad] bg-white text-[#2b2b2b]"
          >
            <Ico>
              <path d="M4.500 .5h8V5M4.500 .5l-4 4v11H5M4.500 .5v4h-4" />
              <path d="M10.500 6.500L6.500 9l4 2.500 4-2.500z" />
              <path d="M5.500 12l1.500-1 3.500 2 3.500-2 2 1-5.500 4z" fill="currentColor" stroke="none" />
            </Ico>
          </button>
          <button aria-label="图层视图" className="ml-[9px] text-[#2b2b2b]">
            <Layers />
          </button>
          <span className="ml-[10px] w-[54px] pb-px font-bold">页面 1</span>
          <span className="flex-1 pb-px">圖層 1</span>
          <button aria-label="选项" className="relative mr-[3px] pr-[2px] text-[#2b2b2b]">
            <Gear />
            <Corner />
          </button>
        </div>
        <ObjectList />
        <footer className="flex h-[26px] shrink-0 items-center pl-[5px] text-[#2b2b2b]">
          <button aria-label="新建图层">
            <Ico>
              <path d="M9 1L1 5l4 3" />
              <path d="M3 8l5 3 5-3 3 2.500L8 16l-8-5.500z" fill="currentColor" stroke="none" />
              <path d="M9 0h7v7H9z" fill="#008f45" stroke="none" />
              <path d="M12.500 1v5M10 3.500h5" stroke="#fff" />
            </Ico>
          </button>
          <button aria-label="新建主图层" className="relative ml-[12px] w-5">
            <Ico>
              <path d="M8 1L1 4l7 3M3 6l-2 1.500 7 3 7-3M3 10l-2 1.500 7 3.500 7-3.500-2-1" />
              <path d="M9 0h7v7H9z" fill="#008f45" stroke="none" />
              <path d="M12.500 1v5M10 3.500h5" stroke="#fff" />
            </Ico>
            <Corner />
          </button>
          <button aria-label="添加效果" className="relative ml-[10px] h-4 w-4 text-left text-[#b0b0b0]">
            <span className="font-['Liberation_Serif'] text-base leading-5 font-bold italic">fx</span>
            <svg width="7" height="7" className="absolute top-0 -right-px">
              <path d="M0 0h7v7H0z" fill="#b8b8c0" />
              <path d="M3.500 1v5M1 3.500h5" stroke="#fff" />
            </svg>
          </button>
          <button aria-label="删除" className="ml-[14px] text-[#b0b0b0]">
            <Ico>
              <path d="M1 1h4V0h6v1h4v2H1zM2 4h12v12H2z" fill="currentColor" stroke="none" />
              <path d="M6 6v8M10 6v8" stroke="#f4f4f4" />
            </Ico>
          </button>
          <svg width="116" height="18" className="mr-[6px] ml-auto" role="img" aria-label="缩略图大小">
            <path d="M1 8.500h114M1 10.500h114M1.500 3v13M58.500 3v13M115 3v13" stroke="#b4b4b4" fill="none" />
            <path d="M33.500 1.500h5v16h-5z" fill="#eee" stroke="#999" />
          </svg>
        </footer>
      </div>
      <div className="flex w-5 shrink-0 flex-col items-center bg-[#e9e9e9]">
        <SideTab label="学习" className="h-[74px]">
          <Ico>
            <path d="M8 0l8 3-8 4-8-4zM2 6l6 2v7l-5-2zM10 8l4-2v7l-4 2z" fill="currentColor" stroke="none" />
          </Ico>
        </SideTab>
        <SideTab label="属性" className="h-[75px]">
          <Ico>
            <path d="M1 5l4-4 5 5-4 4zM10 15.500h6M11 12.500h5M8 10l2 5" strokeWidth="1.500" />
            <path d="M3 5h5l-2 2.500z" fill="#e08a1e" stroke="none" />
          </Ico>
        </SideTab>
        <SideTab label="对象 (O)" on className="mt-px h-[97px]">
          <Ico>
            <path d="M8 0L1 4.500 8 9l7-4.500zM2.500 7L1 8.500 8 13l7-4.500L13.500 7" />
            <path d="M3 12l5-3 5 3-5 4z" fill="currentColor" stroke="none" />
          </Ico>
        </SideTab>
        <button aria-label="添加泊坞窗" className="mt-[5px]">
          <Plus />
        </button>
      </div>
    </div>
  </aside>
);

// ---------- colour palette on the right edge ----------

const swatches = [
  "#222223", "#404042", "#58585a", "#5f6968", "#808080", "#8e8e8e", "#a3aaa3", "#bdbdbd", "#cbd2cf", "#e4e5e4",
  "#ffffff", "#2c2e83", "#00a9ff", "#008f45", "#f6e333", "#df1821", "#d91b63", "#aa4484", "#d17d26", "#f3b5a7",
  "#666664", "#c4cee6", "#96a5c9", "#5592cd", "#7471a0", "#7d799a", "#5f708c", "#544c66", "#66709a", "#0085d2",
  "#8ad7f5", "#a8b8cf", "#7899a5", "#5c717c", "#444c54", "#656d6c", "#5c7371", "#5e9993", "#55a08d", "#569f8a",
  "#57bce4", "#4c9ca0", "#a6b5a8", "#cbd2cf",
];

const ColorStrip = () => (
  <aside className="flex w-[13px] shrink-0 flex-col items-end overflow-hidden border-l border-[#d0d0d0]">
    <svg width="10" height="64" className="shrink-0" aria-hidden="true">
      <path d="M0 3h1v1h-1zM4 3h1v1h-1zM8 3h1v1h-1zM2 5h1v1h-1zM6 5h1v1h-1zM0 7h1v1h-1zM4 7h1v1h-1zM8 7h1v1h-1z" fill="#b0b0b0" />
      <path d="M6 13v8l4-4z" fill="#6b7474" />
      <path d="M1 42l9-9" stroke="#bbb" strokeWidth="2" />
      <path d="M2 56l5-5 5 5" stroke="#c4c8c0" strokeWidth="2.500" fill="none" />
    </svg>
    <button aria-label="无填充" className="h-[18px] w-[11px] shrink-0 border-y border-l border-[#333] bg-white">
      <svg width="10" height="16">
        <path d="M2 14L10 6" stroke="#d8202c" />
      </svg>
    </button>
    {swatches.map((c, i) => (
      <button
        key={i}
        aria-label={c}
        className="h-[17px] w-[11px] shrink-0 border-b border-l border-[#555]"
        style={{ background: c }}
      />
    ))}
    <svg width="10" height="36" className="shrink-0" aria-hidden="true">
      <path d="M2 6l5 5 5-5" stroke="#aaa" strokeWidth="2" fill="none" />
      <path d="M3 20l4 4-4 4M7 20l4 4-4 4" stroke="#aaa" fill="none" />
    </svg>
  </aside>
);

// ---------- bottom ----------

const StatusBar = () => (
  <footer className="flex h-[38px] shrink-0 items-center border-t border-[#d6d6d6] pl-[3px]">
    <button aria-label="状态栏选项" className="relative pr-[2px] text-[#2b2b2b]">
      <Gear />
      <Corner />
    </button>
    <p className="ml-[6px] flex-1 pb-[2px] whitespace-nowrap">
      接着单击可进行拖动或缩放；再单击可旋转或倾斜；双击工具，可选择所有对象；按住 <Latin>Shift</Latin>{" "}
      键单击可选择多个对象；按住 <Latin>Alt</Latin> 键单击可进行挖掘
    </p>
    <div className="flex w-[202px] shrink-0 items-center">
      <Bucket />
      <span className="mr-1 ml-[2px] border border-[#999] bg-white">
        <svg width="20" height="20" className="block">
          <path d="M0 20L20 0" stroke="#e0241c" strokeWidth="2" />
        </svg>
      </span>
      <span className="pb-[2px]">无</span>
    </div>
    <div className="flex w-[247px] shrink-0 items-center">
      <Ico size={14} className="text-[#222]">
        <path d="M8 0L4.500 8l2 3.500h3l2-3.500zM8 2v6M5.500 11.500h5v4h-5z" strokeWidth="1.200" />
      </Ico>
      <span className="ml-px h-[22px] w-[22px] border border-[#999] bg-[#222223]" />
      <span className="ml-1 pb-px text-[11px] whitespace-pre">C：  0 M：  0 Y：  0 K：  100</span>
    </div>
    <div className="mr-[2px] flex h-full shrink-0 items-center gap-[10px] py-2">
      <div className="h-full w-px bg-[#c8c8c8]" />
      <svg width="17" height="16" role="img" aria-label="校样颜色">
        <path d="M1 1h15v11H1z" fill="#fff" stroke="#222" />
        <path d="M2 2h13v4H2z" fill="#e0241c" />
        <path d="M2 8h13v4H2z" fill="#00a2ff" />
        <circle cx="8.500" cy="6.500" r="2.500" fill="#ddd" stroke="#333" />
        <path d="M5 13.500h7M3 15.500h11" stroke="#222" />
      </svg>
    </div>
  </footer>
);

const Taskbar = () => (
  <div className="flex h-[15px] shrink-0 items-start overflow-hidden border-t border-[#33424e] bg-[#10283a] text-[13px] text-white">
    <span className="mt-[5px] ml-[23px] h-4 w-4 shrink-0 rounded-full bg-[#f3b5a7] text-center text-xs leading-4 text-black">
      1
    </span>
    <span className="mt-1 ml-[5px] w-[610px] shrink-0 leading-5">
      富时中国<Latin>A50</Latin>
    </span>
    <svg width="640" height="14" className="shrink-0" aria-hidden="true">
      <path d="M110 0h280v14H110z" fill="#202228" />
      <path d="M0 12h11v2H0zM12 12h11v2H12z" fill="#6ecbf2" />
      <path d="M39 14q5-7 16-7h182q11 0 16 7" fill="#40454d" stroke="#5d626a" />
      <path d="M219 14l2-4 2 4z" fill="#c9973c" />
      <path d="M274 12h18v2h-18z" fill="#fff" />
      <path d="M312 12h10v2h-10z" fill="#d08a1e" />
      <path d="M359 14q8-5 18 0z" fill="#43b5e8" />
      <path d="M405 12h13v2h-13z" fill="#12a8f5" />
      <path d="M450 14q3-2 6 0z" fill="#4c9a7c" />
      <path d="M534 14q2-3 5-3h10q3 0 5 3z" fill="#0d9b50" />
      <path d="M568 14V5q0-2 2-2h36q2 0 2 2v9z" fill="#22384a" />
      <path d="M588 14q1-8 9-8t9 8z" fill="#b22a26" />
    </svg>
    <span className="mt-[5px] mr-9 ml-auto text-[11px] leading-5">9:33</span>
  </div>
);

const App = () => {
  return (
    <div className="flex h-screen flex-col overflow-hidden bg-[#f4f4f4] font-['Open_Sans','Noto_Sans_CJK_SC',sans-serif] text-[13px] leading-4 text-black">
      <MenuBar />
      <MainBar />
      <PropertyBar />
      <div className="flex min-h-0 flex-1">
        <Toolbox />
        <main className="flex min-w-0 flex-1 flex-col">
          <div className="flex min-h-0 flex-1 flex-col">
            <DocTabs />
            <HRuler />
            <Canvas />
          </div>
          <PageNav />
          <DocPalette />
        </main>
        <div className="w-[2px] shrink-0" />
        <Docker />
        <ColorStrip />
      </div>
      <StatusBar />
      <Taskbar />
    </div>
  );
};

export default App;
